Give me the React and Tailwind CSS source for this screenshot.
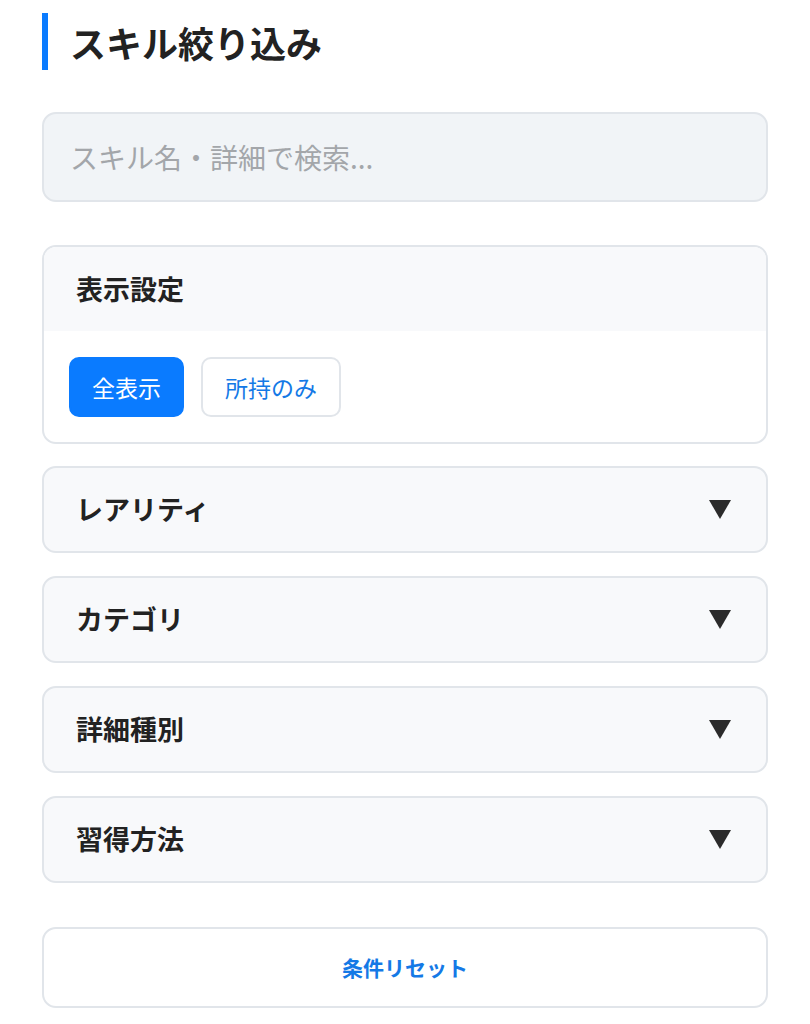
import { useState } from 'react'

const sections = ['レアリティ', 'カテゴリ', '詳細種別', '習得方法']

function Triangle() {
  return (
    <svg width="22" height="19" viewBox="0 0 22 19" aria-hidden="true">
      <path d="M0 0 H22 L11 19 Z" fill="#2b2b2b" />
    </svg>
  )
}

export default function App() {
  const [mode, setMode] = useState('all')
  const [query, setQuery] = useState('')

  return (
    <div
      className="min-h-screen bg-white text-[#222] px-[42px] pt-[13px] pb-10"
      style={{ fontFamily: '"Noto Sans CJK JP", "Noto Sans", sans-serif' }}
    >
      {/* Title */}
      <h2 className="border-l-[6px] border-[#0a7bff] pl-[22px] h-[57px] flex items-center text-[36px] font-bold leading-none">
        スキル絞り込み
      </h2>

      {/* Search */}
      <input
        type="text"
        value={query}
        onChange={(e) => setQuery(e.target.value)}
        placeholder="スキル名・詳細で検索..."
        className="mt-[42px] block w-full h-[90px] rounded-[14px] border-2 border-[#e1e5ea] bg-[#f1f4f7] px-[26px] text-[28px] text-[#222] placeholder:text-[#a3a6aa] outline-none"
      />

      {/* Display settings */}
      <div className="mt-[43px] rounded-[14px] border-2 border-[#e1e5ea] overflow-hidden">
        <div className="h-[84px] bg-[#f8f9fb] flex items-center px-[32px] text-[27px] font-bold">
          表示設定
        </div>
        <div className="flex gap-[17px] px-[25px] pt-[26px] pb-[25px]">
          <button
            type="button"
            onClick={() => setMode('all')}
            className={`h-[60px] px-[21px] rounded-[10px] text-[23px] border-2 ${
              mode === 'all'
                ? 'bg-[#0a7bff] border-[#0a7bff] text-white'
                : 'bg-white border-[#e1e5ea] text-[#1479e6]'
            }`}
          >
            全表示
          </button>
          <button
            type="button"
            onClick={() => setMode('owned')}
            className={`h-[60px] px-[22px] rounded-[10px] text-[23px] border-2 ${
              mode === 'owned'
                ? 'bg-[#0a7bff] border-[#0a7bff] text-white'
                : 'bg-white border-[#e1e5ea] text-[#1479e6]'
            }`}
          >
            所持のみ
          </button>
        </div>
      </div>

      {/* Collapsible filters */}
      <div className="mt-[22px] flex flex-col gap-[23px]">
        {sections.map((label) => (
          <button
            key={label}
            type="button"
            className="h-[87px] w-full rounded-[14px] border-2 border-[#e1e5ea] bg-[#f8f9fb] flex items-center justify-between pl-[32px] pr-[35px] text-[27px] font-bold text-left"
          >
            <span>{label}</span>
            <Triangle />
          </button>
        ))}
      </div>

      {/* Reset */}
      <button
        type="button"
        onClick={() => {
          setMode('all')
          setQuery('')
        }}
        className="mt-[44px] w-full h-[81px] rounded-[14px] border-2 border-[#e1e5ea] bg-white text-[21px] font-bold text-[#1479e6]"
      >
        条件リセット
      </button>
    </div>
  )
}
